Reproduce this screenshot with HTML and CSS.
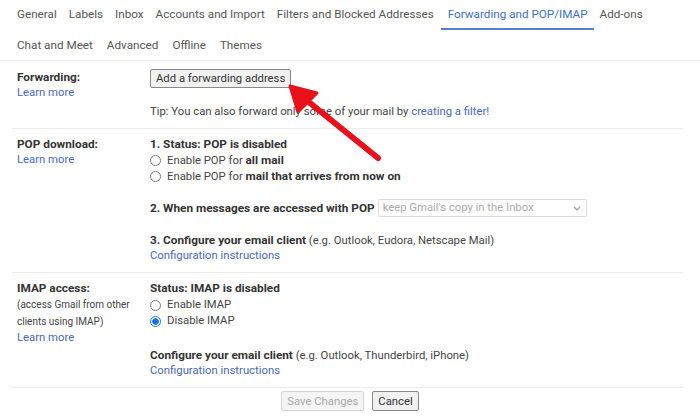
FILE: index.html
```html
<!DOCTYPE html>
<html>
<head>
<meta charset="utf-8">
<link rel="stylesheet" href="styles.css">
</head>
<body>
<div class="page">
  <nav class="tabs">
    <div class="tab-row first">
      <span class="tab">General</span>
      <span class="tab">Labels</span>
      <span class="tab">Inbox</span>
      <span class="tab">Accounts and Import</span>
      <span class="tab">Filters and Blocked Addresses</span>
      <span class="tab active">Forwarding and POP/IMAP</span>
      <span class="tab">Add-ons</span>
    </div>
    <div class="tab-row second">
      <span class="tab">Chat and Meet</span>
      <span class="tab">Advanced</span>
      <span class="tab">Offline</span>
      <span class="tab">Themes</span>
    </div>
  </nav>

  <section class="row row-fwd">
    <div class="label">
      <div class="title">Forwarding:</div>
      <a class="link">Learn more</a>
    </div>
    <div class="value">
      <button class="btn">Add a forwarding address</button>
      <div class="tip">Tip: You can also forward only some of your mail by <a class="link">creating a filter!</a></div>
    </div>
  </section>

  <section class="row row-pop">
    <div class="label">
      <div class="title">POP download:</div>
      <a class="link">Learn more</a>
    </div>
    <div class="value">
      <div class="b">1. Status: POP is disabled</div>
      <div class="radio"><span class="dot"></span><span>Enable POP for <b>all mail</b></span></div>
      <div class="radio"><span class="dot"></span><span>Enable POP for <b>mail that arrives from now on</b></span></div>
      <div class="line">
        <b>2. When messages are accessed with POP</b>
        <span class="select">keep Gmail's copy in the Inbox<svg class="chev" width="8" height="5" viewBox="0 0 8 5"><path d="M1 1l3 3 3-3" fill="none" stroke="#999" stroke-width="1.2"/></svg></span>
      </div>
      <div class="gap"><b>3. Configure your email client</b> (e.g. Outlook, Eudora, Netscape Mail)</div>
      <a class="link">Configuration instructions</a>
    </div>
  </section>

  <section class="row row-imap">
    <div class="label">
      <div class="title">IMAP access:</div>
      <div class="small">(access Gmail from other</div>
      <div class="small">clients using IMAP)</div>
      <a class="link">Learn more</a>
    </div>
    <div class="value">
      <div class="b">Status: IMAP is disabled</div>
      <div class="radio r1"><span class="dot"></span><span>Enable IMAP</span></div>
      <div class="radio"><span class="dot on"></span><span>Disable IMAP</span></div>
      <div class="gap2"><b>Configure your email client</b> (e.g. Outlook, Thunderbird, iPhone)</div>
      <a class="link">Configuration instructions</a>
    </div>
  </section>

  <div class="actions">
    <button class="btn disabled">Save Changes</button>
    <button class="btn">Cancel</button>
  </div>

  <svg class="arrow" width="120" height="110" viewBox="0 0 120 110">
    <line x1="95" y1="92" x2="22" y2="33" stroke="#e8101a" stroke-width="6" stroke-linecap="round"/>
    <polygon points="7,20 34,27 15,46" fill="#e8101a" stroke="#e8101a" stroke-width="3" stroke-linejoin="round"/>
  </svg>
</div>
</body>
</html>
```

FILE: styles.css
```css
* { box-sizing: border-box; }
html, body { margin: 0; padding: 0; background: #fff; }
body {
  font-family: Roboto, "Liberation Sans", Arial, sans-serif;
  font-size: 11.3px;
  color: #222;
  width: 700px;
  height: 416px;
  overflow: hidden;
}
.page { position: relative; }

.tabs {
  border-bottom: 1px solid #ececec;
  padding-left: 11px;
}
.tab-row {
  display: flex;
  height: 30px;
  align-items: stretch;
}
.tab {
  padding: 6px 6px 0;
  color: #555;
  font-size: 11.7px;
  line-height: 16px;
}
.second .tab { padding: 7px 7px 0 6px; }
.second .tab + .tab { padding-left: 7px; }
.tab.active {
  color: #3c6fca;
  border-bottom: 2px solid #4f7fd0;
  padding-left: 7px;
  padding-right: 6px;
  margin-left: 1px;
}

.row {
  display: flex;
  margin: 0 17px 0 12px;
  padding: 8px 0 8px 5px;
  border-bottom: 1px solid #ececec;
  line-height: 16px;
}
.row-pop { padding-top: 7px; padding-bottom: 8px; }
.row-imap { padding-top: 7px; padding-bottom: 8px; }
.label { width: 133px; flex: none; display: flex; flex-direction: column; align-items: flex-start; }
.title { font-weight: bold; color: #333; font-size: 11.8px; height: 16px; }
.small { font-size: 10px; line-height: 17px; color: #444; }
.value { flex: 1; display: flex; flex-direction: column; align-items: flex-start; }
.link { color: #4a68b8; text-decoration: none; }
.b { font-weight: bold; color: #333; font-size: 11.8px; height: 16px; }
b { color: #333; font-size: 11.8px; }

.btn {
  font-family: Roboto, "Liberation Sans", Arial, sans-serif;
  font-size: 11.3px;
  color: #333;
  background: #f1f1f1;
  border: 1px solid #8a8a8a;
  border-radius: 2px;
  padding: 0 5px;
  height: 19px;
  line-height: 17px;
  margin: 0;
}
.tip { margin-top: 16px; color: #444; }

.radio { display: flex; align-items: center; color: #444; height: 16px; }
.r1 { margin-top: 1px; }
.dot {
  width: 11px; height: 11px;
  border: 1px solid #777;
  border-radius: 50%;
  margin-right: 6px;
  flex: none;
}
.dot.on {
  border-color: #1a73e8;
  background: radial-gradient(circle, #1a73e8 0 3px, #fff 3.5px);
}
.line { display: flex; align-items: center; gap: 3px; margin-top: 15px; height: 18px; }
.gap { margin-top: 15px; color: #444; height: 16px; }
.gap2 { margin-top: 18px; color: #444; height: 16px; }
.value > .link { height: 16px; }
.select {
  display: inline-flex;
  align-items: center;
  justify-content: space-between;
  width: 209px;
  height: 18px;
  border: 1px solid #dcdcdc;
  border-radius: 2px;
  padding: 0 5px 0 4px;
  color: #aaa;
}

.actions {
  display: flex;
  justify-content: center;
  gap: 8px;
  padding-top: 3px;
}
.actions .btn { height: 20px; }
.btn.disabled { color: #aaa; border-color: #d4d4d4; background: #f4f4f4; }

.arrow {
  position: absolute;
  left: 283px;
  top: 66px;
}
```
